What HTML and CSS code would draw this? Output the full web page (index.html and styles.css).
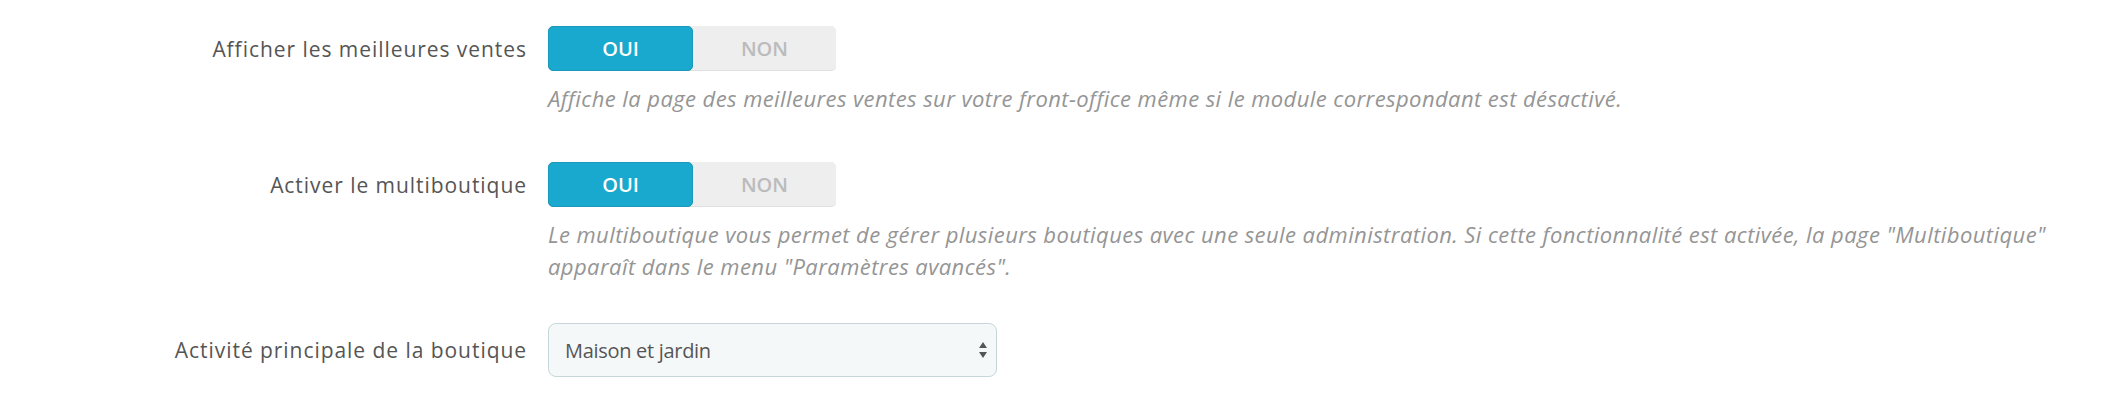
FILE: index.html
```html
<!DOCTYPE html>
<html lang="fr">
<head>
<meta charset="utf-8">
<link rel="stylesheet" href="styles.css">
</head>
<body>
<form class="form">
  <div class="row row-first">
    <div class="label">Afficher les meilleures ventes</div>
    <div class="control">
      <div class="toggle">
        <span class="opt opt-on">OUI</span>
        <span class="opt opt-off">NON</span>
      </div>
      <p class="help">Affiche la page des meilleures ventes sur votre front-office même si le module correspondant est désactivé.</p>
    </div>
  </div>
  <div class="row row-second">
    <div class="label">Activer le multiboutique</div>
    <div class="control">
      <div class="toggle">
        <span class="opt opt-on">OUI</span>
        <span class="opt opt-off">NON</span>
      </div>
      <p class="help">Le multiboutique vous permet de gérer plusieurs boutiques avec une seule administration. Si cette fonctionnalité est activée, la page "Multiboutique"<br>apparaît dans le menu "Paramètres avancés".</p>
    </div>
  </div>
  <div class="row row-third">
    <div class="label label-select">Activité principale de la boutique</div>
    <div class="control">
      <div class="select-wrap">
        <select class="select"><option>Maison et jardin</option></select>
        <svg class="arrows" width="10" height="18" viewBox="0 0 10 18"><path d="M5 1 L9 7 L1 7 Z M5 17 L9 11 L1 11 Z" fill="#555"/></svg>
      </div>
    </div>
  </div>
</form>
</body>
</html>
```
FILE: styles.css
```css
* { box-sizing: border-box; }
html, body { margin: 0; padding: 0; background: #fff; }
body {
  font-family: "Open Sans", "Noto Sans", sans-serif;
  color: #555;
  width: 2102px;
  height: 400px;
  overflow: hidden;
}
.form {
  display: flex;
  flex-direction: column;
  padding-top: 26px;
}
.row {
  display: grid;
  grid-template-columns: 527px 1fr;
  column-gap: 21px;
}
.row-second { margin-top: 48px; }
.row-third { margin-top: 41px; }
.label {
  height: 45px;
  display: flex;
  align-items: center;
  justify-content: flex-end;
  font-size: 21px;
  letter-spacing: 0.95px;
  color: #555;
  white-space: nowrap;
}
.label-select { height: 54px; }
.control { display: flex; flex-direction: column; }
.toggle {
  display: flex;
  width: 288px;
  height: 45px;
  background: #eee;
  border-radius: 5px;
  box-shadow: inset 0 -1px 0 #e2e2e2;
}
.opt {
  flex: 1;
  display: flex;
  align-items: center;
  justify-content: center;
  font-size: 20px;
  font-weight: 600;
  text-transform: uppercase;
}
.opt-on {
  background: #1aa9ce;
  color: #fff;
  border: 1px solid #1898ba;
  border-radius: 5px;
}
.opt-off { color: #bbb; }
.help {
  margin: 11px 0 0;
  font-size: 22px;
  font-style: italic;
  letter-spacing: 0.42px;
  line-height: 32px;
  color: #959595;
  white-space: nowrap;
}
.select-wrap {
  position: relative;
  width: 449px;
  height: 54px;
}
.select {
  appearance: none;
  -webkit-appearance: none;
  width: 100%;
  height: 100%;
  border: 1px solid #c7d6db;
  border-radius: 8px;
  background: #f5f8f9;
  padding: 0 40px 0 16px;
  font-family: "Open Sans", "Noto Sans", sans-serif;
  font-size: 20px;
  letter-spacing: -0.3px;
  color: #555;
}
.arrows {
  position: absolute;
  right: 9px;
  top: 18px;
}
```
